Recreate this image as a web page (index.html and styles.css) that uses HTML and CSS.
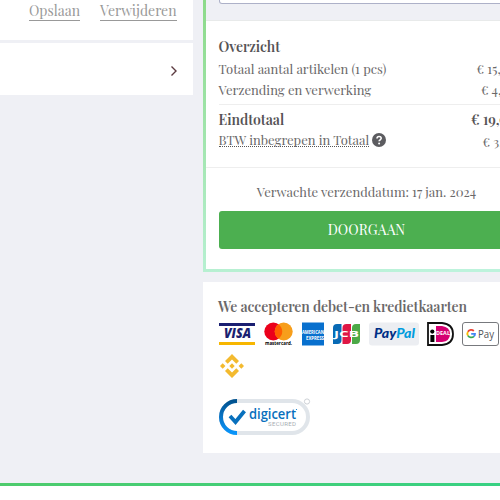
FILE: index.html
```html
<!DOCTYPE html>
<html lang="nl">
<head>
<meta charset="utf-8">
<title>Winkelwagen</title>
<link rel="stylesheet" href="styles.css">
</head>
<body>
<main class="page">
  <section class="items">
    <div class="item-actions"><a class="save">Opslaan</a><a class="remove">Verwijderen</a></div>
    <div class="item-more"><svg width="8" height="12" viewBox="0 0 8 12"><path d="M1.5 1.5L6 6L1.5 10.5" fill="none" stroke="#5b3a40" stroke-width="1.4"/></svg></div>
  </section>
  <aside class="sidebar">
    <div class="checkout">
      <div class="voucher"><div class="field"></div></div>
      <div class="summary">
        <h2 class="overview"><span>Overzicht</span></h2>
        <div class="row articles"><span>Totaal aantal artikelen (1 pcs)</span><b>€ 15,9</b></div>
        <div class="row shipping"><span>Verzending en verwerking</span><b>€ 4,9</b></div>
        <div class="row total"><span>Eindtotaal</span><b>€ 19,9</b></div>
        <div class="row tax"><span>BTW inbegrepen in Totaal</span><svg class="help" width="14" height="14" viewBox="0 0 14 14"><circle cx="7" cy="7" r="7" fill="#5c5c60"/><path d="M5 5.5C5 2.8 9.2 2.8 9.2 5.3C9.2 6.8 7.1 6.8 7.1 8.3" fill="none" stroke="#fff" stroke-width="1.6"/><circle cx="7.1" cy="10.5" r="1" fill="#fff"/></svg><b>€ 3,</b></div>
      </div>
      <div class="confirm">
        <p class="date"><span>Verwachte verzenddatum: 17 jan. 2024</span></p>
        <button class="continue"><span>DOORGAAN</span></button>
      </div>
    </div>
    <div class="payments">
      <h2 class="accept"><span>We accepteren debet-en kredietkaarten</span></h2>
      <div class="logos">
        <svg width="36" height="24" viewBox="0 0 36 24"><path fill="#1a1f71" d="M0 1h36v3H0z"/><path fill="#f7b600" d="M0 20h36v3H0z"/><text x="5" y="16" textLength="27" lengthAdjust="spacingAndGlyphs" class="visa">VISA</text></svg>
        <svg class="mc" width="29" height="24" viewBox="0 0 29 24"><circle cx="9.3" cy="9.5" r="9" fill="#eb001b"/><circle cx="19.7" cy="9.5" r="9" fill="#f79e1b"/><path d="M14.5 2.2a9 9 0 0 1 0 14.6a9 9 0 0 1 0-14.6" fill="#ff5f00"/><text x="1" y="22.5" textLength="27" lengthAdjust="spacingAndGlyphs" class="mctext">mastercard.</text></svg>
        <svg class="amex" width="22" height="24" viewBox="0 0 22 24"><path fill="#0870ce" d="M0 .5h22v23H0z"/><text x="0" y="11.5" textLength="22" lengthAdjust="spacingAndGlyphs">AMERICAN</text><text x="4" y="17.5" textLength="18" lengthAdjust="spacingAndGlyphs">EXPRESS</text></svg>
        <svg class="jcb" width="27" height="22" viewBox="0 0 27 22"><path fill="#086ab5" d="M4 1h4.5v16q0 4-4 4H0V5q0-4 4-4"/><path fill="#df1745" d="M13.5 1H18v16q0 4-4 4H9.5V5q0-4 4-4"/><path fill="#4ca947" d="M23 1h4v16q0 4-4 4h-4V5q0-4 4-4"/><text x="1" y="14.2" textLength="25" lengthAdjust="spacingAndGlyphs">JCB</text></svg>
        <svg class="paypal" width="50" height="24" viewBox="0 0 50 24"><rect y=".5" width="50" height="23" rx="3" fill="#eceef2"/><text x="5" y="16" textLength="41" lengthAdjust="spacingAndGlyphs"><tspan fill="#002f86">Pay</tspan><tspan fill="#009cde">Pal</tspan></text></svg>
        <svg class="ideal" width="27" height="24" viewBox="0 0 27 24"><path d="M1 1h14q11 1 11 11t-11 11H1z" fill="#fff" stroke="#111" stroke-width="1.8"/><path d="M9 4h6q8 1 8 8t-8 8H9z" fill="#d50072"/><circle cx="5.3" cy="9.6" r="2.1"/><path d="M3.4 13h4v7h-4z"/><text x="9" y="12.5" textLength="14" lengthAdjust="spacingAndGlyphs">DEAL</text></svg>
        <svg class="gpay" width="37" height="24" viewBox="0 0 37 24"><rect x=".5" y=".5" width="36" height="23" rx="2.5" fill="#fff" stroke="#77797d"/><g fill="none" stroke-width="1.8"><path d="M11.8 9A3.8 3.8 0 0 0 5.9 9.8" stroke="#ea4335"/><path d="M5.9 9.8a3.8 3.8 0 0 0 0 3.8" stroke="#fbbc04"/><path d="M5.9 13.6a3.8 3.8 0 0 0 6 .7" stroke="#34a853"/><path d="M9.2 11.8H13q0 1.7-1.1 2.5" stroke="#4285f4"/></g><text x="16" y="15.5" textLength="16" lengthAdjust="spacingAndGlyphs">Pay</text></svg>
        <svg class="binance" width="24" height="24" viewBox="0 0 24 24" fill="#f3ba2f"><path d="M12 0l7 7-2.7 2.7L12 5.4 7.7 9.7 5 7zM12 24l7-7-2.7-2.7-4.3 4.3-4.3-4.3L5 17zM12 9.3l2.7 2.7-2.7 2.7L9.3 12zM2.7 9.3L5.4 12l-2.7 2.7L0 12zM21.3 9.3L24 12l-2.7 2.7-2.7-2.7z"/></svg>
      </div>
      <svg class="digicert" width="94" height="40" viewBox="0 0 94 40"><defs><linearGradient id="seal" x2="0" y2="1"><stop stop-color="#00528f"/><stop offset=".55" stop-color="#0878cd"/><stop offset="1" stop-color="#0894fa"/></linearGradient></defs><rect x="2" y="3" width="87" height="32" rx="16" fill="#fff" stroke="#e0e5ea" stroke-width="4"/><path d="M18 3a16 16 0 0 0 0 32" fill="none" stroke="url(#seal)" stroke-width="4"/><path d="M11 18l5.5 6L25.5 13" fill="none" stroke="#0870bd" stroke-width="3.8"/><text x="30" y="20.5" textLength="47" lengthAdjust="spacingAndGlyphs" class="digi">digicert</text><text x="49" y="28" textLength="28" class="secured">SECURED</text><circle cx="88" cy="3.5" r="2.6" fill="#fff" stroke="#cdd1d6"/><circle cx="77.5" cy="11.5" r=".6" fill="#0870bd"/></svg>
    </div>
  </aside>
</main>
</body>
</html>
```
FILE: styles.css
```css
* { box-sizing: border-box; }
body { margin: 0; background: #fff; color: #6a6869; font: 13px/21px "Playfair Display", "Liberation Serif", serif; overflow: hidden; }
h2, p { margin: 0; }
.page { width: 500px; height: 486px; display: flex; gap: 10px; overflow: hidden; background: #eff0f5; border-bottom: 3px solid; border-image: linear-gradient(90deg, #4ecb6c, #38d183) 1; }
.items { width: 193px; flex: none; }
.item-actions { height: 40px; background: #fff; padding: 1px 16px 0 0; display: flex; justify-content: flex-end; align-items: flex-start; gap: 20px; color: #999; font-size: 14px; }
.item-actions a { height: 20px; line-height: 20px; border-bottom: 1px solid #999; white-space: nowrap; }
.save { width: 51px; }
.remove { width: 77px; }
.item-more { height: 52px; margin-top: 3px; padding-right: 15px; background: #fff; display: flex; align-items: center; justify-content: flex-end; }
.item-more svg { margin-top: 4px; }
.sidebar { width: 328px; flex: none; }
.checkout { height: 272px; padding: 0 3px 3px; background: linear-gradient(170deg, #8cda89, #bdf3dc 95%); }
.voucher { height: 21px; background: #eff0f5; border-bottom: 1px solid #e8eaea; padding: 0 13px; }
.field { height: 4px; background: #fff; border: 1px solid #adb1c8; border-top: 0; border-radius: 0 0 3px 3px; }
.summary { height: 147px; background: #fff; padding: 15px 13px 0; border-bottom: 1px solid #eee; }
h2 { color: #555355; font-size: 14px; line-height: 21px; font-weight: 600; letter-spacing: -.08px; }
.overview { margin-left: -.5px; }
.row { display: flex; height: 21px; white-space: nowrap; }
.row > span { margin-left: -.5px; }
.articles { margin-top: 1px; }
.row b { margin-left: auto; font-weight: normal; text-align: left; }
.articles b { width: 38.5px; }
.shipping b { width: 34px; }
.total b { width: 44px; font-weight: 600; }
.tax b { width: 32.5px; padding-top: 2px; }
.total { margin-top: 4px; padding-top: 4px; height: 25px; border-top: 1px solid #eee; color: #555355; font-weight: 600; font-size: 14px; letter-spacing: -.04px; }
.tax span { height: 18px; border-bottom: 1px dotted #555; }
.help { margin: 4px 0 0 3px; }
.confirm { height: 101px; padding: 13px 13px 0; background: #fff; }
.date { text-align: center; white-space: nowrap; }
.date span { margin-right: 1px; }
.continue { display: block; width: 100%; height: 38px; margin-top: 9px; padding: 0; border: 0; border-radius: 3px; background: #4caf50; color: #fff; font: 14px/38px "Playfair Display", "Liberation Serif", serif; letter-spacing: .1px; }
.continue span { margin-right: 1px; }
.payments { margin-top: 10px; height: 171px; padding: 14px 16px 0; background: #fff; }
.accept { margin-left: -1px; white-space: nowrap; color: #6a6869; }
.logos { display: flex; flex-wrap: wrap; width: 288px; margin-top: 5px; row-gap: 8px; align-items: center; }
.logos svg { flex: none; }
.mc { margin-left: 9px; }
.amex { margin-left: 9px; }
.jcb { margin-left: 9px; }
.paypal { margin-left: 9px; }
.ideal { margin-left: 8px; }
.gpay { margin-left: 8px; }
.binance { margin-left: 1px; }
svg text { font-family: "Open Sans", sans-serif; }
.visa { font-size: 14px; font-weight: 800; font-style: italic; fill: #1a1f71; }
.mctext { font-size: 5px; font-weight: bold; }
.amex text { font-size: 5px; font-weight: bold; fill: #fff; }
.jcb text { font-size: 9px; font-weight: bold; fill: #fff; }
.paypal text { font-family: Lato, sans-serif; font-size: 13px; font-weight: 900; font-style: italic; }
.ideal text { font-size: 6px; font-weight: bold; fill: #fff; }
.gpay text { font-size: 11px; fill: #515459; }
.digicert { display: block; margin-top: 20px; }
.digi { font-size: 15px; font-weight: 600; fill: #0870bd; }
svg .secured { font: 6px "Roboto", sans-serif; fill: #a7adb3; }
```
